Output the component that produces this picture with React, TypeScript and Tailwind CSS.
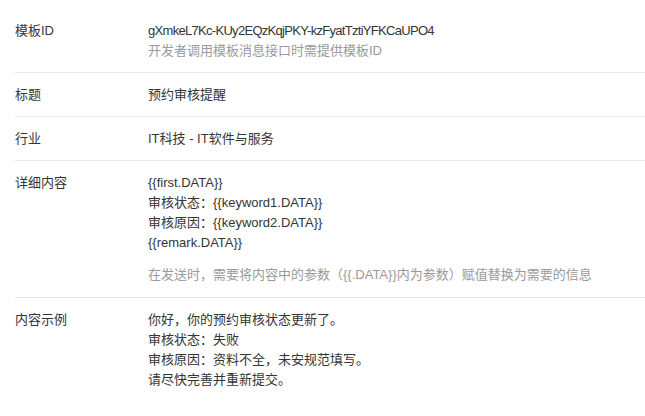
const rows = [
  {
    label: "模板ID",
    lines: ["gXmkeL7Kc-KUy2EQzKqjPKY-kzFyatTztiYFKCaUPO4"],
    hint: "开发者调用模板消息接口时需提供模板ID",
  },
  { label: "标题", lines: ["预约审核提醒"] },
  { label: "行业", lines: ["IT科技 - IT软件与服务"] },
  {
    label: "详细内容",
    lines: [
      "{{first.DATA}}",
      "审核状态：{{keyword1.DATA}}",
      "审核原因：{{keyword2.DATA}}",
      "{{remark.DATA}}",
    ],
    note: "在发送时，需要将内容中的参数（{{.DATA}}内为参数）赋值替换为需要的信息",
  },
  {
    label: "内容示例",
    lines: [
      "你好，你的预约审核状态更新了。",
      "审核状态：失败",
      "审核原因：资料不全，未安规范填写。",
      "请尽快完善并重新提交。",
    ],
  },
];

export default function App() {
  return (
    <div
      className="w-[645px] h-[416px] bg-white pl-[15px] text-[13px] leading-5 text-[#353535] overflow-hidden"
      style={{ fontFamily: '"Liberation Sans", "Noto Sans CJK SC", sans-serif' }}
    >
      {rows.map((row, i) => (
        <div
          key={row.label}
          className={
            i === 0
              ? "flex pt-[21px] pb-[11px] border-b border-[#e7e7eb]"
              : i === rows.length - 1
              ? "flex pt-3 pb-3"
              : "flex pt-3 pb-[11px] border-b border-[#e7e7eb]"
          }
        >
          <div className="w-[133px] shrink-0">{row.label}</div>
          <div className="flex flex-col">
            {row.lines.map((l) => (
              <div key={l} className={i === 0 ? "tracking-[-0.7px]" : ""}>
                {l}
              </div>
            ))}
            {row.hint && <div className="text-[#9a9a9a]">{row.hint}</div>}
            {row.note && (
              <div className="text-[#9a9a9a] mt-3 pb-[1px]">{row.note}</div>
            )}
          </div>
        </div>
      ))}
    </div>
  );
}
